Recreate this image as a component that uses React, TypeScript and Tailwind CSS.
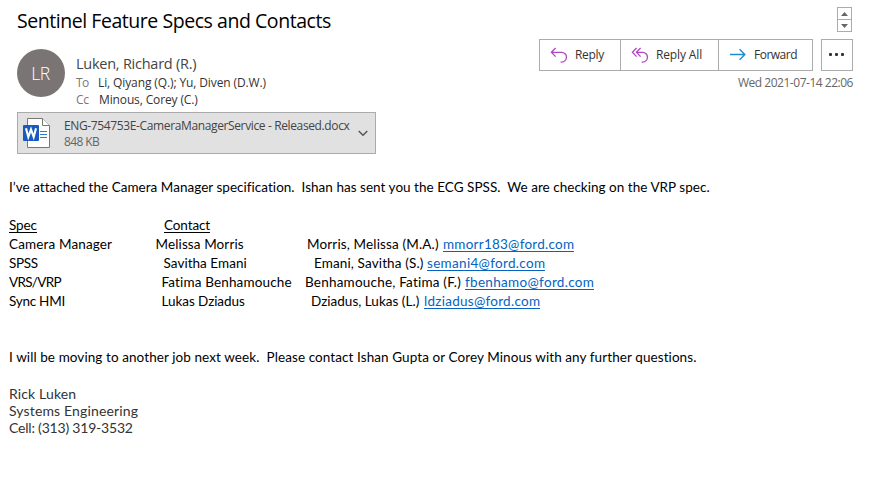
import type { ReactNode } from "react";

function ReplyIcon() {
  return (
    <svg width="18" height="18" viewBox="0 0 18 18" fill="none" stroke="#b146c2" strokeWidth="1.3" className="shrink-0">
      <path d="M5.6 2 L1.4 6.3 L5.6 10.6 M1.4 6.3 H11.6 A4.9 4.9 0 0 1 11.6 16.1 H10.6" />
    </svg>
  );
}

function ReplyAllIcon() {
  return (
    <svg width="18" height="18" viewBox="0 0 18 18" fill="none" stroke="#b146c2" strokeWidth="1.3" className="shrink-0">
      <path d="M5.6 2 L1.4 6.3 L5.6 10.6 M9.6 2 L5.4 6.3 L9.6 10.6 M5.4 6.3 H11.6 A4.9 4.9 0 0 1 11.6 16.1 H10.6" />
    </svg>
  );
}

function ForwardIcon() {
  return (
    <svg width="18" height="18" viewBox="0 0 18 18" fill="none" stroke="#1e8bcd" strokeWidth="1.4" className="shrink-0">
      <path d="M1 8.5 H15.6 M10.6 3.3 L15.8 8.5 L10.6 13.7" />
    </svg>
  );
}

function WordIcon() {
  return (
    <svg width="28" height="32" viewBox="0 0 28 32" className="shrink-0">
      <path d="M4.5 1.5 H19.5 L26.5 8.5 V30.5 H4.5 Z" fill="#fff" stroke="#777" />
      <path d="M19.5 1.5 V8.5 H26.5" fill="#fff" stroke="#777" />
      <path d="M17 14.5 H24 M17 17.5 H24 M17 20.5 H24" stroke="#2b7cd3" />
      <rect x="0" y="8" width="16" height="16" rx="1" fill="#185abd" />
      <path d="M3 11.3 L5.3 20 L8 12.4 L10.7 20 L13 11.3" fill="none" stroke="#fff" strokeWidth="2.1" />
    </svg>
  );
}

function Contact({ spec, name, nameClass, full, fullClass, mail, mailClass }: {
  spec: ReactNode; name: string; nameClass: string; full: string; fullClass: string; mail: string; mailClass: string;
}) {
  return (
    <div className="flex">
      <span className="w-[146px] shrink-0">{spec}</span>
      <span className={"w-[150px] shrink-0 " + nameClass}>{name}</span>
      <span className={"shrink-0 " + fullClass}>{full}</span>
      <a className={"h-[17px] border-b border-[#0563c1] text-[#0563c1] " + mailClass}>{mail}</a>
    </div>
  );
}

export default function App() {
  return (
    <div className="h-[499px] w-[871px] overflow-hidden whitespace-pre bg-white font-['Open_Sans',sans-serif] text-[12px] text-[#333]">
      <header className="flex h-[112px] justify-between pl-[17px] pr-[18px]">
        <div>
          <h1 className="h-[49px] text-[19.5px] leading-[42px] tracking-[-0.45px] text-black">Sentinel Feature Specs and Contacts</h1>
          <div className="flex gap-[11px]">
            <div className="flex size-[48px] items-center justify-center rounded-full bg-[#7a7574] pr-px text-[17.5px] font-light tracking-[-0.4px] text-white">LR</div>
            <div className="pt-[5px]">
              <div className="h-[20px] text-[14.5px] leading-[20px] tracking-[-0.25px] text-[#444]">Luken, Richard (R.)</div>
              <div className="flex h-[17px] leading-[18px]">
                <span className="w-[22px] tracking-[-0.6px] text-[#777]">To</span>
                <span className="tracking-[-0.115px]">Li, Qiyang (Q.); Yu, Diven (D.W.)</span>
              </div>
              <div className="flex h-[17px] leading-[18px]">
                <span className="w-[23px] tracking-[-0.3px] text-[#777]">Cc</span>
                <span className="tracking-[-0.13px]">Minous, Corey (C.)</span>
              </div>
            </div>
          </div>
        </div>
        <div className="flex flex-col items-end pt-[7px]">
          <div className="mr-px flex h-[25px] w-[15px] flex-col divide-y divide-[#ababab] border border-[#ababab]">
            <div className="flex flex-1 items-center justify-center">
              <svg width="7" height="4"><path d="M3.5 0 L7 4 H0 Z" fill="#666" /></svg>
            </div>
            <div className="flex flex-1 items-center justify-center">
              <svg width="7" height="4"><path d="M3.5 4 L7 0 H0 Z" fill="#666" /></svg>
            </div>
          </div>
          <div className="mt-[7px] flex h-[32px] gap-[8px]">
            <div className="flex w-[274px] divide-x divide-[#ababab] border border-[#ababab]">
              <div className="flex w-[81px] items-center gap-[7px] pl-[10px]"><ReplyIcon /><span className="tracking-[-0.3px]">Reply</span></div>
              <div className="flex w-[98px] items-center gap-[7px] pl-[10px]"><ReplyAllIcon /><span className="tracking-[-0.14px]">Reply All</span></div>
              <div className="flex flex-1 items-center gap-[7px] pl-[10px]"><ForwardIcon /><span className="tracking-[-0.5px]">Forward</span></div>
            </div>
            <div className="flex w-[32px] items-center justify-center gap-[3px] border border-[#ababab] pb-px pr-px">
              <i className="size-[3px] rounded-[1px] bg-[#333]" />
              <i className="size-[3px] rounded-[1px] bg-[#333]" />
              <i className="size-[3px] rounded-[1px] bg-[#333]" />
            </div>
          </div>
          <div className="mt-[3px] leading-[18px] tracking-[-0.48px] text-[#666]">Wed 2021-07-14 22:06</div>
        </div>
      </header>

      <div className="ml-[17px] flex h-[42px] w-[359px] items-center border border-[#ababab] bg-[#e1e1e1] pl-[5px]">
        <WordIcon />
        <div className="ml-[13px] w-[294px] pt-[2px] leading-[16px]">
          <div className="tracking-[-0.37px] text-[#444]">ENG-754753E-CameraManagerService - Released.docx</div>
          <div className="tracking-[-0.6px] text-[#666]">848 KB</div>
        </div>
        <svg width="10" height="7" viewBox="0 0 10 7" fill="none" stroke="#555" strokeWidth="1.5"><path d="M0.7 1 L5 5.3 L9.3 1" /></svg>
      </div>

      <main className="pl-[9px] pt-[24px] font-[Lato,sans-serif] text-[13.5px] leading-[19px] text-black">
        <p className="h-[38px] tracking-[0.03px]">I’ve attached the Camera Manager specification.  Ishan has sent you the ECG SPSS.  We are checking on the VRP spec.</p>
        <div className="flex h-[19px]">
          <span className="w-[155px]"><span className="inline-block h-[17px] border-b border-black tracking-[-0.1px]">Spec</span></span>
          <span className="h-[17px] border-b border-black tracking-[-0.1px]">Contact</span>
        </div>
        <Contact spec={<span className="tracking-[0.14px]">Camera Manager</span>}
          name="Melissa Morris" nameClass="pl-[0.6px] tracking-[0.105px]"
          full="Morris, Melissa (M.A.)" fullClass="ml-[2px] w-[136px] tracking-[0.15px]"
          mail="mmorr183@ford.com" mailClass="tracking-[0.242px]" />
        <Contact spec={<span className="tracking-[-0.3px]">SPSS</span>}
          name="Savitha Emani" nameClass="pl-[8.5px] tracking-[0.04px]"
          full="Emani, Savitha (S.)" fullClass="ml-[9px] w-[113px] tracking-[0.13px]"
          mail="semani4@ford.com" mailClass="tracking-[0.311px]" />
        <Contact spec={<span className="tracking-[-0.7px]">VRS/VRP</span>}
          name="Fatima Benhamouche" nameClass="pl-[6.5px] tracking-[0.15px]"
          full="Benhamouche, Fatima (F.)" fullClass="w-[160px] tracking-[0.214px]"
          mail="fbenhamo@ford.com" mailClass="tracking-[0.315px]" />
        <Contact spec={<span className="tracking-[-0.25px]">Sync HMI</span>}
          name="Lukas Dziadus" nameClass="pl-[6.5px] tracking-[-0.06px]"
          full="Dziadus, Lukas (L.)" fullClass="ml-[6px] w-[113px] tracking-[0.02px]"
          mail="ldziadus@ford.com" mailClass="tracking-[0.271px]" />
        <p className="mt-[37px] tracking-[0.085px]">I will be moving to another job next week.  Please contact Ishan Gupta or Corey Minous with any further questions.</p>
        <div className="mt-[18px] text-[14px] leading-[17px] text-[#333]">
          <p className="tracking-[0.13px]">Rick Luken</p>
          <p className="tracking-[0.14px]">Systems Engineering</p>
          <p className="tracking-[-0.2px]">Cell: (313) 319-3532</p>
        </div>
      </main>
    </div>
  );
}
